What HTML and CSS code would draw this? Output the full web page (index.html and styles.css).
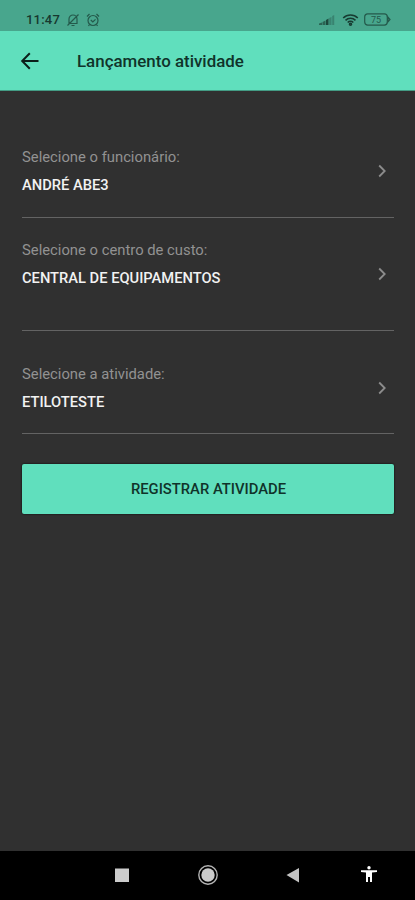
FILE: index.html
```html
<!doctype html>
<html lang="pt-BR">

<head>
    <meta charset="utf-8">
    <title>Lançamento atividade</title>
    <meta name="viewport" content="width=device-width, initial-scale=1">
    <link rel="stylesheet" href="styles.css">
</head>

<body>
    <div class="page">
        <div class="status-bar">
            <span class="clock">11:47</span>
            <svg class="icon-mute" width="14" height="14" viewBox="0 0 14 14">
                <path d="M3 10.500V6a4 4 0 0 1 8 0v4.500zM5.500 12.500h3M1.500 12.500l11-11"/>
            </svg>
            <svg class="icon-alarm" width="14" height="14" viewBox="0 0 14 14">
                <circle cx="7" cy="7.500" r="5"/>
                <path d="M1 3.500L3.500 1M13 3.500L10.500 1M4.800 7l2 2 2.700-2.700M3.500 11.500L2.500 13M10.500 11.500l1 1.500"/>
            </svg>
            <div class="status-right">
                <svg class="icon-signal" width="16" height="12" viewBox="0 0 16 12">
                    <path d="M0 11V9.500L3 8.500V11zM3.500 11V8L6.500 6.500V11z"/>
                    <path class="strong" d="M7 11V6l2.500-1.500V11z"/>
                    <path class="faint" d="M10.200 11V4l2.300-1V11zM13.200 11V2l2-1V11z"/>
                </svg>
                <svg class="icon-wifi" width="18" height="14" viewBox="0 0 18 14">
                    <path d="M1.200 5a10.500 10.500 0 0 1 14.600 0M3.500 7.300a7.200 7.200 0 0 1 10 0M5.700 9.500a4 4 0 0 1 5.600 0"/>
                    <circle cx="8.500" cy="11.300" r="1"/>
                </svg>
                <svg class="icon-battery" width="27" height="13" viewBox="0 0 27 13">
                    <rect x="0.700" y="0.900" width="22.600" height="11.200" rx="3"/>
                    <path d="M24 4.200l2 2.300-2 2.300z"/>
                    <text x="12" y="9.800">75</text>
                </svg>
            </div>
        </div>
        <div class="app-bar">
            <svg class="back" width="20" height="20" viewBox="0 0 20 20">
                <path d="M18.500 10H2.500M9.800 2.300L2.200 10l7.600 7.700"/>
            </svg>
            <h1 class="title">Lançamento atividade</h1>
        </div>
        <div class="content">
            <div class="item">
                <div class="item-text">
                    <div class="label">Selecione o funcionário:</div>
                    <div class="value">ANDRÉ ABE3</div>
                </div>
                <svg class="chevron" width="8" height="14" viewBox="0 0 8 14"><path d="M1.200 1.500L6.700 7l-5.500 5.500"/></svg>
            </div>
            <div class="item item-tall">
                <div class="item-text">
                    <div class="label">Selecione o centro de custo:</div>
                    <div class="value">CENTRAL DE EQUIPAMENTOS</div>
                </div>
                <svg class="chevron" width="8" height="14" viewBox="0 0 8 14"><path d="M1.200 1.500L6.700 7l-5.500 5.500"/></svg>
            </div>
            <div class="item item-last">
                <div class="item-text">
                    <div class="label">Selecione a atividade:</div>
                    <div class="value">ETILOTESTE</div>
                </div>
                <svg class="chevron" width="8" height="14" viewBox="0 0 8 14"><path d="M1.200 1.500L6.700 7l-5.500 5.500"/></svg>
            </div>
            <button class="btn" type="button">REGISTRAR ATIVIDADE</button>
        </div>
        <div class="nav-bar">
            <svg width="22" height="22" viewBox="0 0 22 22"><rect x="4" y="4.500" width="14" height="13.500" fill="#ccc"/></svg>
            <svg width="22" height="22" viewBox="0 0 22 22">
                <circle cx="11" cy="11" r="9.200" fill="none" stroke="#b4b4b4" stroke-width="1.400"/>
                <circle cx="11" cy="11" r="6.700" fill="#ccc"/>
            </svg>
            <svg width="22" height="22" viewBox="0 0 22 22"><path d="M3.500 11L16 4v14.500z" fill="#c4c4c4"/></svg>
            <svg class="accessibility" width="22" height="22" viewBox="0 0 22 22">
                <circle cx="11" cy="3.800" r="1.700"/>
                <path d="M3 6.200h16v1.700l-5 .6V18h-2v-5h-2v5H8V8.500l-5-.6z"/>
            </svg>
        </div>
    </div>
</body>

</html>
```

FILE: styles.css
```css
html,
body {
    height: 100%;
    margin: 0;
    padding: 0;
    background: #303030;
    font-family: Roboto, sans-serif;
}

.page {
    height: 100%;
    display: flex;
    flex-direction: column;
}

.status-bar {
    height: 31px;
    box-sizing: border-box;
    padding: 8px 24px 0 26px;
    display: flex;
    align-items: center;
    background: #48a68d;
    color: #17382f;
}

.status-bar svg {
    fill: none;
    stroke: #24594b;
    stroke-width: 1.2;
}

.clock {
    width: 40px;
    font-size: 13px;
    font-weight: 500;
    letter-spacing: 0.2px;
}

.icon-alarm {
    margin-left: 6px;
}

.status-right {
    margin-left: auto;
    display: flex;
    align-items: center;
}

.status-bar .icon-signal {
    margin-right: 7px;
    fill: #2b6454;
    stroke: none;
}

.icon-signal .strong {
    fill: #1c493d;
}

.icon-signal .faint {
    fill: #398370;
}

.status-bar .icon-wifi {
    margin-right: 4px;
    stroke: #173c32;
    stroke-width: 1.6;
}

.status-bar .icon-battery text {
    fill: #24594b;
    stroke: none;
    font-size: 9px;
    text-anchor: middle;
}

.app-bar {
    height: 60px;
    box-sizing: border-box;
    padding: 1px 0 0 20px;
    display: flex;
    align-items: center;
    background: #60dfbd;
    border-bottom: 1px solid #439c84;
}

.back {
    fill: none;
    stroke: #0b1f1a;
    stroke-width: 2;
}

.title {
    margin: 0 0 0 37px;
    font-size: 16.9px;
    font-weight: 500;
    color: #10332a;
}

.content {
    flex: 1;
    padding: 56px 21px 0 22px;
}

.item {
    height: 48px;
    padding: 0 8px 22px 0;
    margin-bottom: 22px;
    display: flex;
    justify-content: space-between;
    align-items: center;
    border-bottom: 1px solid #636363;
}

.item-text {
    height: 100%;
}

.item-tall {
    height: 67px;
    padding-bottom: 23px;
    margin-bottom: 33px;
}

.item-last {
    padding-bottom: 21px;
    margin-bottom: 30px;
}

.label {
    font-size: 14.8px;
    line-height: 20px;
    color: #929292;
}

.value {
    margin-top: 8px;
    font-size: 14.7px;
    line-height: 20px;
    font-weight: 500;
    color: #f2f2f2;
}

.chevron {
    fill: none;
    stroke: #8c8c8c;
    stroke-width: 1.8;
}

.btn {
    display: block;
    width: 100%;
    height: 50px;
    padding: 0 0 0 1px;
    border: 0;
    border-radius: 2px;
    background: #60dfbd;
    box-shadow: 0 0 2px #000;
    font-family: inherit;
    font-size: 14.8px;
    font-weight: 500;
    color: #10332a;
}

.nav-bar {
    height: 49px;
    box-sizing: border-box;
    padding: 0 35px 1px 111px;
    display: grid;
    grid-template-columns: 86px 86px 75px 22px;
    align-items: center;
    background: #000;
}

.accessibility {
    fill: #fff;
}
```
